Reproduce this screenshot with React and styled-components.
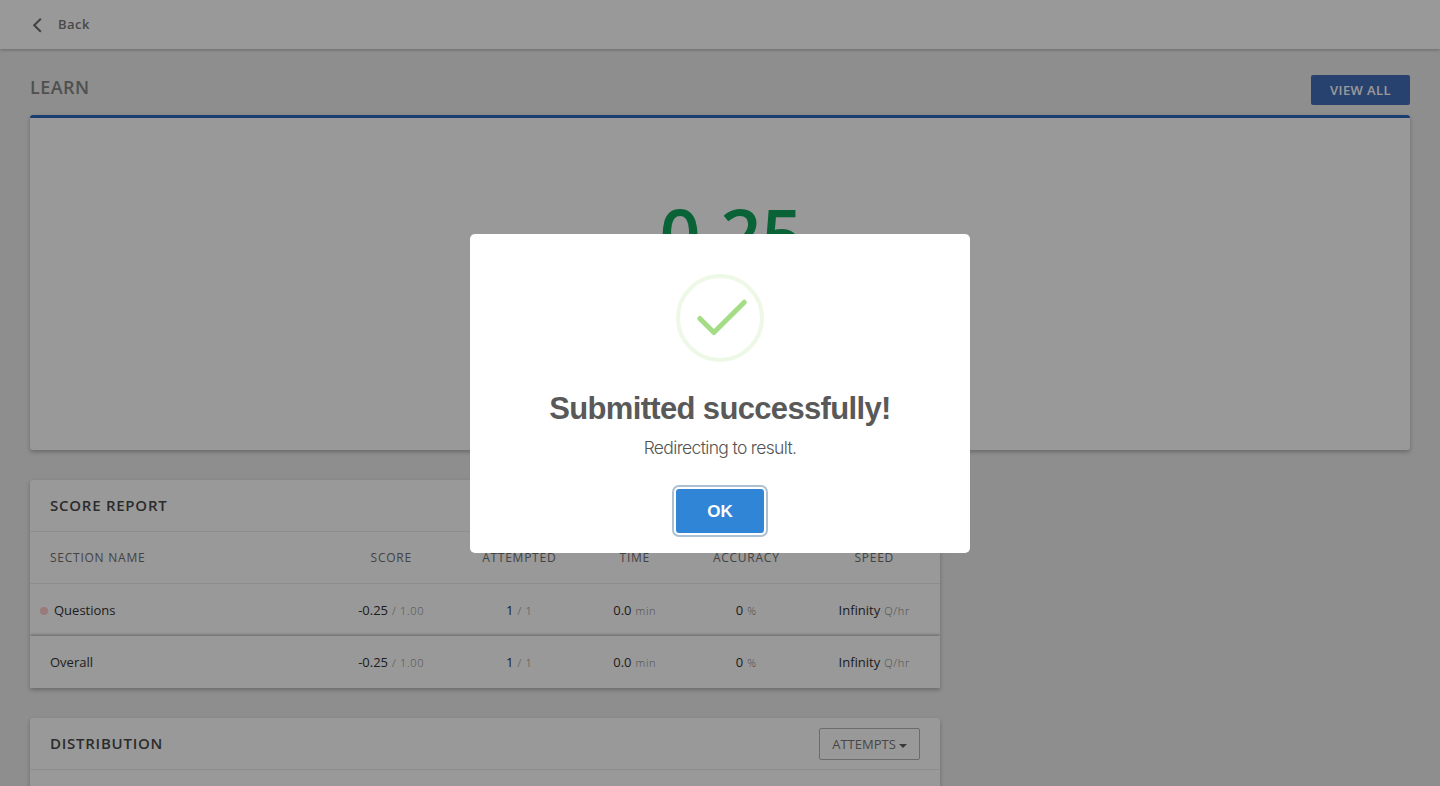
import React from "react";
import styled, { createGlobalStyle } from "styled-components";

const GlobalStyle = createGlobalStyle`
  * { box-sizing: border-box; }
  body {
    margin: 0;
    background: #ededed;
    font-family: "Open Sans", "Noto Sans", sans-serif;
    color: #333;
    overflow: hidden;
  }
`;

const Page = styled.div`
  height: 786px;
  overflow: hidden;
`;

const TopBar = styled.header`
  display: flex;
  align-items: center;
  height: 49px;
  padding: 0 32px;
  background: #fff;
  box-shadow: 0 1px 3px rgba(0, 0, 0, 0.25);
`;

const BackLabel = styled.span`
  margin: 0 0 2px 16px;
  font-size: 13px;
  font-weight: 600;
  letter-spacing: 0.5px;
  line-height: 18px;
  color: #7a7a7a;
`;

const Content = styled.main`
  padding: 26px 30px 0;
`;

const Heading = styled.div`
  display: flex;
  justify-content: space-between;
  height: 40px;
`;

const PageTitle = styled.h1`
  margin: 0;
  font-size: 18px;
  font-weight: 600;
  letter-spacing: 0.45px;
  line-height: 25px;
  color: #858585;
`;

const ViewAll = styled.button`
  width: 99px;
  height: 30px;
  padding: 0;
  border: 0;
  border-radius: 2px;
  background: #446eba;
  color: #fff;
  font: 600 13px/30px "Open Sans", sans-serif;
  letter-spacing: 0.4px;
`;

const Card = styled.section`
  width: ${(p) => p.$width || "auto"};
  height: ${(p) => p.$height};
  margin-bottom: 30px;
  background: #fff;
  border-radius: ${(p) => (p.$square ? "3px 3px 0 0" : "3px")};
  box-shadow: 0 2px 4px rgba(0, 0, 0, 0.26);
`;

const ScoreCard = styled(Card)`
  padding: 67px 0 0 22px;
  border-top: 3px solid #2a67bc;
  text-align: center;
`;

const BigScore = styled.div`
  font-size: 72px;
  font-weight: 600;
  line-height: 98px;
  color: #12a55d;
`;

const CardHeader = styled.div`
  display: flex;
  align-items: center;
  justify-content: space-between;
  height: 52px;
  padding: 0 20px;
  border-bottom: 1px solid #ebebeb;
`;

const CardTitle = styled.h2`
  margin: 0 0 2px;
  font-size: 15px;
  font-weight: 600;
  letter-spacing: 0.75px;
  line-height: 20px;
  color: #4a4a4a;
`;

const Row = styled.div`
  display: grid;
  grid-template-columns: 299px 124px 132px 99px 124px 132px;
  align-items: center;
  height: 52px;
  font-size: 13px;
  line-height: 18px;
  text-align: center;
`;

const HeadRow = styled(Row)`
  border-bottom: 1px solid #ebebeb;
  font-size: 12px;
  letter-spacing: 0.75px;
  color: #707070;
`;

const HeadLabel = styled.div`
  padding-left: 0.5px;
`;

const TotalRow = styled(Row)`
  box-shadow: 0 -1px 3px rgba(0, 0, 0, 0.35);
  clip-path: inset(-4px 0 0 0);
`;

const NameCell = styled.div`
  display: flex;
  align-items: center;
  padding-left: ${(p) => (p.$dotted ? "10px" : "20px")};
`;

const Dot = styled.span`
  width: 8px;
  height: 8px;
  margin: 2px 6px 0 0;
  border-radius: 50%;
  background: #ffcdcd;
`;

const Cell = styled.div`
  padding-left: 0.5px;
`;

const Unit = styled.small`
  margin-left: 4px;
  font-size: 11px;
  font-weight: 300;
  letter-spacing: 0.7px;
  color: #858585;
`;

const Dropdown = styled.button`
  display: flex;
  align-items: center;
  justify-content: center;
  gap: 3px;
  width: 101px;
  height: 32px;
  margin-top: 1px;
  padding: 0;
  border: 1px solid #b5b5b5;
  border-radius: 2px;
  background: #fff;
  color: #777;
  font: 400 13px/18px "Open Sans", sans-serif;
  letter-spacing: 0;
`;

const Caret = styled.span`
  margin-top: 3px;
  border: 4px solid transparent;
  border-top-color: #606060;
  border-bottom: 0;
`;

const Backdrop = styled.div`
  position: fixed;
  inset: 0;
  display: flex;
  align-items: center;
  justify-content: center;
  background: rgba(0, 0, 0, 0.4);
`;

const Modal = styled.div`
  display: flex;
  flex-direction: column;
  align-items: center;
  width: 500px;
  height: 319px;
  margin-top: 1px;
  padding-top: 40px;
  border-radius: 5px;
  background: #fff;
  font-family: "Liberation Sans", Arial, sans-serif;
`;

const ModalTitle = styled.h2`
  margin: 28px 0 0;
  font-size: 31px;
  font-weight: 700;
  letter-spacing: -0.66px;
  line-height: 37px;
  color: #595959;
`;

const ModalText = styled.p`
  margin: 10px 0 0;
  font-family: Inter, sans-serif;
  font-size: 17.5px;
  font-weight: 300;
  letter-spacing: -0.65px;
  line-height: 22px;
  color: #545454;
`;

const OkButton = styled.button`
  width: 88px;
  height: 44px;
  margin-top: 30px;
  padding: 0;
  border: 0;
  border-radius: 3px;
  background: #3085d6;
  box-shadow: 0 0 0 2px #fff, 0 0 0 4px rgba(50, 100, 150, 0.4);
  color: #fff;
  font: 700 17px/45px "Liberation Sans", Arial, sans-serif;
`;

const columns = ["SCORE", "ATTEMPTED", "TIME", "ACCURACY", "SPEED"];
const values = [
  ["-0.25", "/ 1.00"],
  ["1", "/ 1"],
  ["0.0", "min"],
  ["0", "%"],
  ["Infinity", "Q/hr"],
];

const Values = () =>
  values.map(([value, unit]) => (
    <Cell key={unit}>
      {value}
      <Unit>{unit}</Unit>
    </Cell>
  ));

export default function App() {
  return (
    <>
      <GlobalStyle />
      <Page>
        <TopBar>
          <svg width="10" height="16" viewBox="0 0 10 16" fill="none" stroke="#6c6c6c" strokeWidth="2">
            <path d="M8.8 1.8 2.2 8.3l6.6 6.5" />
          </svg>
          <BackLabel>Back</BackLabel>
        </TopBar>
        <Content>
          <Heading>
            <PageTitle>LEARN</PageTitle>
            <ViewAll>VIEW ALL</ViewAll>
          </Heading>
          <ScoreCard $height="335px">
            <BigScore>0.25</BigScore>
          </ScoreCard>
          <Card $width="910px" $height="208px" $square>
            <CardHeader>
              <CardTitle>SCORE REPORT</CardTitle>
            </CardHeader>
            <HeadRow>
              <NameCell>SECTION NAME</NameCell>
              {columns.map((name) => (
                <HeadLabel key={name}>{name}</HeadLabel>
              ))}
            </HeadRow>
            <Row>
              <NameCell $dotted>
                <Dot />
                Questions
              </NameCell>
              <Values />
            </Row>
            <TotalRow>
              <NameCell>Overall</NameCell>
              <Values />
            </TotalRow>
          </Card>
          <Card $width="910px" $height="300px">
            <CardHeader>
              <CardTitle>DISTRIBUTION</CardTitle>
              <Dropdown>
                ATTEMPTS
                <Caret />
              </Dropdown>
            </CardHeader>
          </Card>
        </Content>
      </Page>
      <Backdrop>
        <Modal role="dialog">
          <svg width="88" height="88" viewBox="0 0 88 88" fill="none">
            <circle cx="44" cy="44" r="42" stroke="#edf8e7" strokeWidth="4" />
            <path d="M23.8 44.5 37.9 58.6 68.3 28.2" stroke="#a5dc86" strokeWidth="5" strokeLinecap="round" strokeLinejoin="round" />
          </svg>
          <ModalTitle>Submitted successfully!</ModalTitle>
          <ModalText>Redirecting to result.</ModalText>
          <OkButton>OK</OkButton>
        </Modal>
      </Backdrop>
    </>
  );
}
